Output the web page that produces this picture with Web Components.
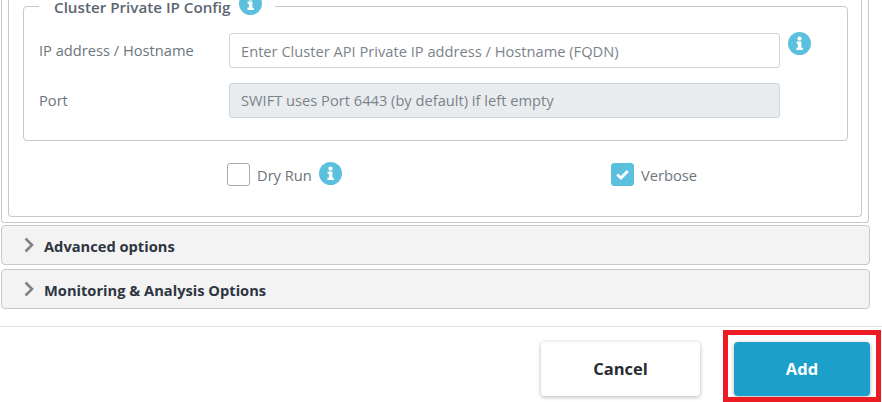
<!DOCTYPE html>
<html lang="en">
<head>
<meta charset="utf-8">
<title>Cluster form</title>
<style>
  html, body { margin: 0; padding: 0; background: #fff; }
  body { width: 882px; height: 402px; overflow: hidden; position: relative; font-family: "Open Sans", sans-serif; color: #6c757d; }
  accordion-bar.first { margin-top: 2px; }
</style>
</head>
<body>
<form-panel>
  <ip-fieldset legend="Cluster Private IP Config">
    <form-field label="IP address / Hostname" placeholder="Enter Cluster API Private IP address / Hostname (FQDN)" info></form-field>
    <form-field label="Port" placeholder="SWIFT uses Port 6443 (by default) if left empty" disabled></form-field>
  </ip-fieldset>
  <check-row></check-row>
</form-panel>
<accordion-bar class="first" title-text="Advanced options"></accordion-bar>
<accordion-bar title-text="Monitoring &amp; Analysis Options"></accordion-bar>
<footer-bar></footer-bar>

<script>
  // ---- shared icon ----
  class InfoIcon extends HTMLElement {
    constructor() {
      super();
      this.attachShadow({ mode: "open" }).innerHTML = `
        <style>
          :host { display: block; width: 23px; height: 23px; }
          svg { display: block; width: 100%; height: 100%; }
        </style>
        <svg viewBox="0 0 23 23">
          <circle cx="11.5" cy="11.5" r="11.5" fill="#5bc0de"/>
          <circle cx="11.5" cy="6.6" r="2.1" fill="#fff"/>
          <path d="M8.6 9.6h4.8v6.2h1.4v2.2H8.4v-2.2h1.5v-4H8.6z" fill="#fff"/>
        </svg>`;
    }
  }
  customElements.define("info-icon", InfoIcon);

  // ---- outer and inner frames ----
  class FormPanel extends HTMLElement {
    constructor() {
      super();
      this.attachShadow({ mode: "open" }).innerHTML = `
        <style>
          :host { display: block; width: 868px; margin: -40px 0 0 1px; box-sizing: border-box;
                  border: 1px solid #c8c8c8; border-top: 0; border-radius: 0 0 3px 3px; padding: 0 6px 6px; height: 263px; }
          .inner { box-sizing: border-box; height: 257px; border: 1px solid #c8c8c8; border-top: 0;
                   border-radius: 0 0 4px 4px; padding: 36px 13px 0 14px; }
        </style>
        <div class="inner"><slot></slot></div>`;
    }
  }
  customElements.define("form-panel", FormPanel);

  // ---- fieldset with legend on the border ----
  class IpFieldset extends HTMLElement {
    constructor() {
      super();
      this.attachShadow({ mode: "open" }).innerHTML = `
        <style>
          :host { display: block; }
          fieldset { margin: 0; padding: 17px 15px 0; height: 145px; box-sizing: border-box;
                     border: 1px solid #c8c8c8; border-radius: 4px; min-width: 0; }
          legend { display: flex; align-items: center; gap: 8px; margin-left: 0; padding: 0 13px 0 15px; height: 20px;
                   font-size: 15.2px; font-weight: 600; color: #5c6670; }
          #t { line-height: 14px; margin-top: 2px; }
          info-icon { margin-top: -6px; }
        </style>
        <fieldset>
          <legend><span id="t"></span><info-icon></info-icon></legend>
          <slot></slot>
        </fieldset>`;
      this.shadowRoot.getElementById("t").textContent = this.getAttribute("legend");
    }
  }
  customElements.define("ip-fieldset", IpFieldset);

  // ---- label + input row ----
  class FormField extends HTMLElement {
    constructor() {
      super();
      this.attachShadow({ mode: "open" }).innerHTML = `
        <style>
          :host { display: grid; grid-template-columns: 190px 551px 32px; align-items: start; margin-bottom: 15px;
                  font-size: 14.67px; color: #6c757d; }
          label { line-height: 34px; }
          .box { box-sizing: border-box; height: 35px; border: 1px solid #ced4da; border-radius: 3px; background: #fff;
                 padding: 0 11px; line-height: 35px; white-space: nowrap; overflow: hidden; color: #7b838a; }
          :host([disabled]) .box { background: #e9ecef; line-height: 33px; }
          info-icon { margin: -1px 0 0 8px; }
        </style>
        <label></label><div class="box"></div><span id="after"></span>`;
      const root = this.shadowRoot;
      root.querySelector("label").textContent = this.getAttribute("label");
      root.querySelector(".box").textContent = this.getAttribute("placeholder");
      if (this.hasAttribute("info")) {
        root.getElementById("after").appendChild(document.createElement("info-icon"));
      }
    }
  }
  customElements.define("form-field", FormField);

  // ---- checkbox ----
  class CheckBox extends HTMLElement {
    constructor() {
      super();
      this.attachShadow({ mode: "open" }).innerHTML = `
        <style>
          :host { display: flex; align-items: center; gap: 7px; font-size: 14.67px; color: #6c757d; }
          .b { box-sizing: border-box; width: 23px; height: 23px; border: 1px solid #aaa; border-radius: 3px; background: #fff; }
          :host([checked]) .b { background: #5bc0de; border-color: #5bc0de; }
          svg { display: none; width: 100%; height: 100%; }
          :host([checked]) svg { display: block; }
        </style>
        <span class="b"><svg viewBox="0 0 21 21"><path d="M5.2 10.5L9 14L15.8 7" fill="none" stroke="#fff" stroke-width="3"/></svg></span>
        <slot></slot>`;
    }
  }
  customElements.define("check-box", CheckBox);

  class CheckRow extends HTMLElement {
    constructor() {
      super();
      this.attachShadow({ mode: "open" }).innerHTML = `
        <style>
          :host { display: flex; padding: 22px 0 0 204px; }
          .a { display: flex; align-items: center; gap: 7px; width: 384px; }
          info-icon { margin-top: -3px; }
        </style>
        <div class="a"><check-box>Dry Run</check-box><info-icon></info-icon></div>
        <check-box checked>Verbose</check-box>`;
    }
  }
  customElements.define("check-row", CheckRow);

  // ---- collapsed accordion header ----
  class AccordionBar extends HTMLElement {
    constructor() {
      super();
      this.attachShadow({ mode: "open" }).innerHTML = `
        <style>
          :host { display: flex; align-items: center; box-sizing: border-box; width: 869px; height: 40px; margin: 4px 0 0 1px;
                  background: #f3f3f3; border: 1px solid #c8c8c8; border-radius: 4px; padding-left: 22px;
                  font-size: 14.67px; font-weight: 700; color: #2f3542; }
          svg { width: 10px; height: 16px; margin-right: 10px; }
          #t { margin-top: 2px; }
        </style>
        <svg viewBox="0 0 10 16"><path d="M1.5 1.5L8 8l-6.5 6.5" fill="none" stroke="#7f8388" stroke-width="2.6"/></svg>
        <span id="t"></span>`;
      this.shadowRoot.getElementById("t").textContent = this.getAttribute("title-text");
    }
  }
  customElements.define("accordion-bar", AccordionBar);

  // ---- footer with the actions ----
  class ActionButton extends HTMLElement {
    constructor() {
      super();
      this.attachShadow({ mode: "open" }).innerHTML = `
        <style>
          :host { display: flex; align-items: center; justify-content: center; box-sizing: border-box; height: 54px;
                  padding-bottom: 2px; border-radius: 4px; font-size: 16.5px; font-weight: 700; background: #fff; color: #282c31;
                  box-shadow: 0 1px 4px rgba(0,0,0,.3); }
          :host([primary]) { background: #1d9fcb; color: #fff; }
        </style>
        <slot></slot>`;
    }
  }
  customElements.define("action-button", ActionButton);

  class FooterBar extends HTMLElement {
    constructor() {
      super();
      this.attachShadow({ mode: "open" }).innerHTML = `
        <style>
          :host { display: flex; justify-content: flex-end; gap: 34px; box-sizing: border-box; width: 882px; margin-top: 17px;
                  border-top: 1px solid #dee2e6; padding: 15px 12px 0 0; position: relative; }
          #cancel { width: 159px; }
          #add { width: 136px; }
          .mark { position: absolute; left: 723px; top: 3px; width: 158px; height: 72px; box-sizing: border-box;
                  border: 5px solid #ed1c24; pointer-events: none; }
        </style>
        <action-button id="cancel">Cancel</action-button>
        <action-button id="add" primary>Add</action-button>
        <div class="mark"></div>`;
    }
  }
  customElements.define("footer-bar", FooterBar);
</script>
</body>
</html>
